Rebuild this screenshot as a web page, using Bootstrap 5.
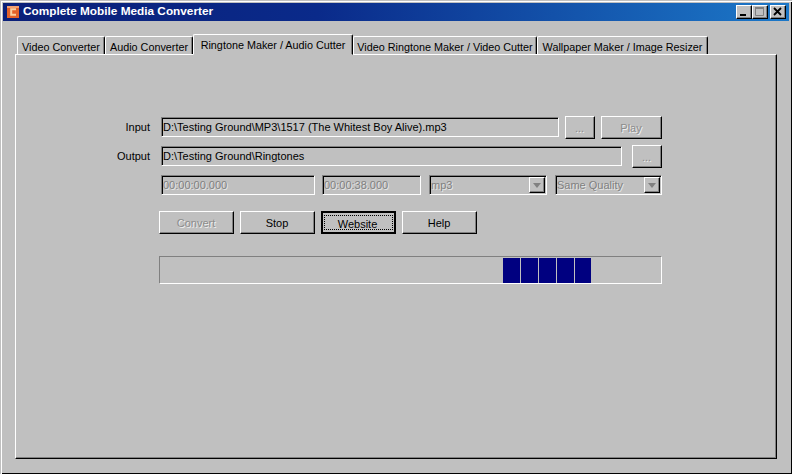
<!DOCTYPE html>
<html lang="en">
<head>
  <meta charset="UTF-8">
  <meta name="viewport" content="width=device-width, initial-scale=1.0">
  <title>Complete Mobile Media Converter</title>
  <link href="https://cdn.jsdelivr.net/npm/bootstrap@5.3.0/dist/css/bootstrap.min.css" rel="stylesheet">
  <style>
    html, body {
      height: 474px;
      overflow: hidden;
    }
    body {
      background: #c0c0c0;
      font-family: "Liberation Sans", Arial, sans-serif;
      font-size: 11px;
      color: #000;
    }
    .win-frame {
      height: 474px;
      padding: 2px 3px 2px 2px;
      border-top: 1px solid #c0c0c0;
      border-left: 1px solid #c0c0c0;
      box-shadow: inset 1px 1px 0 #fff, inset -1px -1px 0 #000;
      display: flex;
      flex-direction: column;
    }
    .title-bar {
      height: 18px;
      flex: none;
      padding: 0 3px 0 4px;
      background: linear-gradient(90deg, #0a1f78 0%, #0a2a8a 40%, #1c78c8 100%);
      color: #fff;
      font-weight: 700;
      font-size: 11.8px;
    }
    .title-btn {
      width: 16px;
      height: 14px;
      background: #c0c0c0;
      border: 1px solid;
      border-color: #fff #000 #000 #fff;
      box-shadow: inset -1px -1px 0 #808080;
      display: flex;
      align-items: center;
      justify-content: center;
    }
    .title-btn.gap-left {
      margin-left: 2px;
    }
    .tab-strip {
      margin: 12px 0 0 14px;
      height: 21px;
      flex: none;
      align-items: flex-end;
      flex-wrap: nowrap;
      position: relative;
      z-index: 1;
    }
    .tab-item {
      height: 18px;
      padding-top: 2px;
      font-size: 10.8px;
      text-align: center;
      color: #000;
      background: #c0c0c0;
      border-top: 1px solid #fff;
      border-left: 1px solid #fff;
      border-right: 1px solid #000;
      border-radius: 2px 2px 0 0;
      box-shadow: inset -1px 0 0 #808080;
      white-space: nowrap;
    }
    .tab-item.active {
      height: 21px;
      border-bottom: 1px solid #c0c0c0;
      margin-bottom: -1px;
      padding-top: 2px;
    }
    .tab-pane-box {
      width: 762px;
      height: 405px;
      flex: none;
      margin-left: 12px;
      background: #c0c0c0;
      border: 1px solid;
      border-color: #fff #000 #000 #fff;
      box-shadow: inset -1px -1px 0 #808080;
      padding-top: 62px;
    }
    .form-rows {
      padding-left: 145px;
    }
    .field-row {
      height: 20px;
      margin-bottom: 9px;
    }
    .field-label {
      width: 134px;
      margin-left: -145px;
      margin-right: 11px;
      flex: none;
      text-align: right;
      line-height: 21px;
    }
    .form-control.sunken {
      height: 20px;
      min-height: 0;
      padding: 2px 0 0 1px;
      font-size: 11px;
      line-height: 15px;
      color: #000;
      background: #c0c0c0;
      border: 1px solid;
      border-color: #808080 #fff #fff #808080;
      border-radius: 0;
      box-shadow: inset 1px 1px 0 #000;
      white-space: nowrap;
      flex: none;
    }
    .form-control.sunken.is-off {
      color: #808080;
      text-shadow: 1px 1px 0 #e6e6e6;
    }
    .w-input { width: 398px; }
    .w-output { width: 461px; }
    .w-start { width: 154px; }
    .w-end { width: 99px; margin-left: 7px; }
    .w-format { width: 118px; margin-left: 8px; position: relative; }
    .w-quality { width: 107px; margin-left: 8px; position: relative; }
    .combo-arrow {
      position: absolute;
      top: 1px;
      right: 1px;
      width: 16px;
      height: 16px;
      background: #c0c0c0;
      border: 1px solid;
      border-color: #fff #000 #000 #fff;
      box-shadow: inset -1px -1px 0 #808080;
      display: flex;
      align-items: center;
      justify-content: center;
    }
    .btn.raised {
      height: 23px;
      padding: 1px 1px 0 0;
      font-size: 11px;
      line-height: 19px;
      color: #000;
      background: #c0c0c0;
      border: 1px solid;
      border-color: #fff #000 #000 #fff;
      border-radius: 0;
      box-shadow: inset -1px -1px 0 #808080;
      flex: none;
      opacity: 1;
    }
    .btn.raised.is-off {
      color: #8c8c8c;
      text-shadow: 1px 1px 0 #f0f0f0;
    }
    .btn.raised.is-default {
      border: 2px solid #000;
      line-height: 14px;
      padding: 1px;
      box-shadow: none;
    }
    .btn.raised.is-default span {
      display: block;
      height: 15px;
      padding-top: 1px;
      padding-right: 2px;
      border: 1px dotted #000;
    }
    .w-dots { width: 30px; margin: -1px 0 0 6px; }
    .w-dots-2 { width: 30px; margin: -1px 0 0 10px; }
    .w-play { width: 61px; margin: -1px 0 0 6px; }
    .w-action { width: 75px; margin-right: 6px; }
    .action-row {
      margin: 16px 0 22px -2px;
    }
    .progress.chunky {
      width: 503px;
      height: 28px;
      margin-left: -2px;
      padding: 1px 0 1px 343px;
      gap: 1px;
      background: #c0c0c0;
      border: 1px solid;
      border-color: #808080 #fff #fff #808080;
      border-radius: 0;
    }
    .chunk {
      width: 17px;
      height: 25px;
      background: #000080;
      flex: none;
    }
    .chunk:last-child {
      width: 16px;
    }
  </style>
</head>
<body>
<div class="win-frame">
  <div class="title-bar d-flex align-items-center">
    <svg width="12" height="12" viewBox="0 0 12 12" class="me-1 flex-shrink-0">
      <rect width="12" height="12" fill="#e2622a"/>
      <rect x="0" y="0" width="12" height="2" fill="#f4a070"/>
      <path d="M9 3.2H4.2v5.6H9" fill="none" stroke="#f8cfa0" stroke-width="2"/>
    </svg>
    <span class="flex-grow-1">Complete Mobile Media Converter</span>
    <div class="d-flex">
      <div class="title-btn">
        <svg width="10" height="10" viewBox="0 0 10 10"><rect x="1" y="7" width="6" height="2" fill="#000"/></svg>
      </div>
      <div class="title-btn">
        <svg width="10" height="10" viewBox="0 0 10 10"><path d="M.5 1.5h8v7h-8z" fill="none" stroke="#808080"/><rect x="0" y="0" width="9" height="2" fill="#808080"/></svg>
      </div>
      <div class="title-btn gap-left">
        <svg width="10" height="10" viewBox="0 0 10 10"><path d="M1 1l7 7M8 1L1 8" stroke="#000" stroke-width="1.8" fill="none"/></svg>
      </div>
    </div>
  </div>

  <div class="nav tab-strip">
    <div class="tab-item" style="width:88px">Video Converter</div>
    <div class="tab-item" style="width:88px">Audio Converter</div>
    <div class="tab-item active" style="width:160px">Ringtone Maker / Audio Cutter</div>
    <div class="tab-item" style="width:184px">Video Ringtone Maker / Video Cutter</div>
    <div class="tab-item" style="width:171px">Wallpaper Maker / Image Resizer</div>
  </div>

  <div class="tab-pane-box">
    <div class="form-rows">
      <div class="field-row d-flex">
        <div class="field-label">Input</div>
        <div class="form-control sunken w-input">D:\Testing Ground\MP3\1517 (The Whitest Boy Alive).mp3</div>
        <button class="btn raised is-off w-dots">...</button>
        <button class="btn raised is-off w-play">Play</button>
      </div>
      <div class="field-row d-flex">
        <div class="field-label">Output</div>
        <div class="form-control sunken w-output">D:\Testing Ground\Ringtones</div>
        <button class="btn raised is-off w-dots-2">...</button>
      </div>
      <div class="field-row d-flex">
        <div class="field-label"></div>
        <div class="form-control sunken is-off w-start">00:00:00.000</div>
        <div class="form-control sunken is-off w-end">00:00:38.000</div>
        <div class="form-control sunken is-off w-format">mp3
          <div class="combo-arrow"><svg width="8" height="5" viewBox="0 0 8 5"><path d="M0 0h8L4 5z" fill="#808080"/></svg></div>
        </div>
        <div class="form-control sunken is-off w-quality">Same Quality
          <div class="combo-arrow"><svg width="8" height="5" viewBox="0 0 8 5"><path d="M0 0h8L4 5z" fill="#808080"/></svg></div>
        </div>
      </div>
      <div class="d-flex action-row">
        <button class="btn raised is-off w-action">Convert</button>
        <button class="btn raised w-action">Stop</button>
        <button class="btn raised is-default w-action"><span>Website</span></button>
        <button class="btn raised w-action">Help</button>
      </div>
      <div class="progress chunky d-flex">
        <div class="chunk"></div>
        <div class="chunk"></div>
        <div class="chunk"></div>
        <div class="chunk"></div>
        <div class="chunk"></div>
      </div>
    </div>
  </div>
</div>
<script src="https://cdn.jsdelivr.net/npm/bootstrap@5.3.0/dist/js/bootstrap.bundle.min.js"></script>
</body>
</html>
